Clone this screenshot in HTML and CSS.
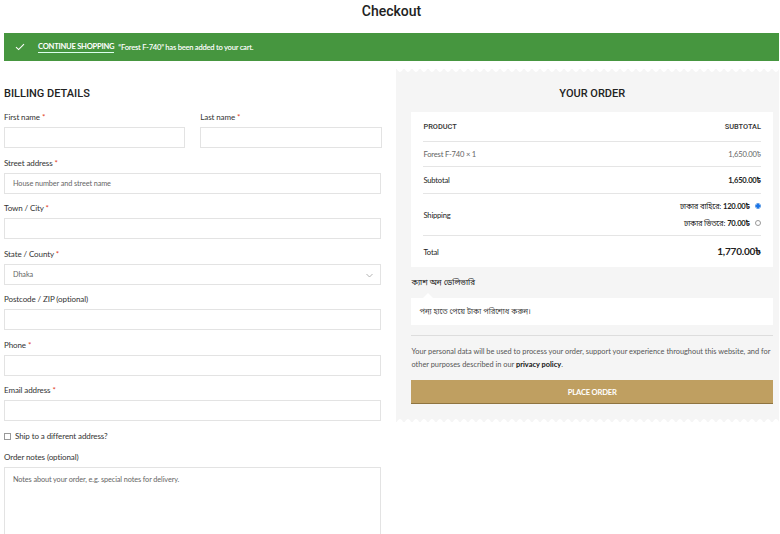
FILE: index.html
```html
<!DOCTYPE html>
<html lang="en">
<head>
<meta charset="utf-8">
<title>Checkout</title>
<link rel="stylesheet" href="styles.css">
</head>
<body>
<div class="page">
  <h1 class="page-title">Checkout</h1>
  <div class="notice">
    <svg class="notice-check" width="10" height="8" viewBox="0 0 10 8"><path d="M1 4.2 L3.6 6.6 L9 1.2" fill="none" stroke="#fff" stroke-width="1.1"/></svg>
    <a class="notice-link" href="#">CONTINUE SHOPPING</a>
    <span class="notice-text">“Forest F-740” has been added to your cart.</span>
  </div>
  <div class="checkout">
    <div class="billing">
      <h3 class="section-title">BILLING DETAILS</h3>
      <div class="row-2">
        <div class="field"><label class="label">First name <span class="req">*</span></label><div class="input"></div></div>
        <div class="field"><label class="label">Last name <span class="req">*</span></label><div class="input"></div></div>
      </div>
      <div class="field"><label class="label">Street address <span class="req">*</span></label><div class="input"><span class="ph">House number and street name</span></div></div>
      <div class="field"><label class="label">Town / City <span class="req">*</span></label><div class="input"></div></div>
      <div class="field"><label class="label">State / County <span class="req">*</span></label>
        <div class="input select"><span class="ph">Dhaka</span>
          <svg class="caret" width="7" height="5" viewBox="0 0 7 5"><path d="M0.5 1 L3.5 4 L6.5 1" fill="none" stroke="#aaa" stroke-width="0.9"/></svg>
        </div>
      </div>
      <div class="field"><label class="label">Postcode / ZIP (optional)</label><div class="input"></div></div>
      <div class="field"><label class="label">Phone <span class="req">*</span></label><div class="input"></div></div>
      <div class="field"><label class="label">Email address <span class="req">*</span></label><div class="input"></div></div>
      <div class="ship-diff"><span class="checkbox"></span><span>Ship to a different address?</span></div>
      <div class="field"><label class="label">Order notes (optional)</label><div class="input textarea"><span class="ph">Notes about your order, e.g. special notes for delivery.</span></div></div>
    </div>
    <div class="order">
      <h3 class="order-title">YOUR ORDER</h3>
      <div class="order-box">
        <div class="orow head"><span>PRODUCT</span><span>SUBTOTAL</span></div>
        <div class="orow item"><span>Forest F-740 × 1</span><span>1,650.00৳</span></div>
        <div class="orow sub"><span>Subtotal</span><span class="strong">1,650.00৳</span></div>
        <div class="orow ship"><span>Shipping</span>
          <div class="ship-opts">
            <div class="ship-opt">ঢাকার বাহিরে: <b>120.00৳</b><span class="radio on"></span></div>
            <div class="ship-opt">ঢাকার ভিতরে: <b>70.00৳</b><span class="radio"></span></div>
          </div>
        </div>
        <div class="orow total"><span>Total</span><span class="total-amt">1,770.00৳</span></div>
      </div>
      <div class="pay-label">ক্যাশ অন ডেলিভারি</div>
      <div class="pay-box">পন্য হাতে পেয়ে টাকা পরিশোধ করুন।</div>
      <p class="privacy">Your personal data will be used to process your order, support your experience throughout this website, and for other purposes described in our <a href="#">privacy policy</a>.</p>
      <button class="place">PLACE ORDER</button>
    </div>
  </div>
</div>
</body>
</html>
```
FILE: styles.css
```css
* { box-sizing: border-box; }
html, body { margin: 0; padding: 0; background: #fff; }
body {
  font-family: Lato, "Noto Sans", "Noto Sans Bengali", sans-serif;
  color: #333;
  width: 780px;
  height: 534px;
  overflow: hidden;
}
.page { padding: 0 1px 0 4px; }
.page-title {
  font-family: Roboto, "Liberation Sans", sans-serif;
  font-weight: 500;
  font-size: 14px;
  line-height: 22px;
  margin: 0;
  height: 33px;
  text-align: center;
  color: #222;
}
.notice {
  background: #46963f;
  height: 28px;
  display: flex;
  align-items: center;
  color: #fff;
  font-size: 7.6px;
  letter-spacing: -0.25px;
}
.notice-check { margin-left: 11px; margin-right: 13px; }
.notice-link {
  color: #fff;
  font-weight: 700;
  text-decoration: none;
  border-bottom: 1px solid #dfe;
  padding-bottom: 1px;
  margin-right: 4px;
}
.notice-text { font-weight: 600; }
.checkout { display: flex; margin-top: 8px; gap: 15px; }
.billing { width: 378px; padding-top: 17px; }
.section-title {
  font-family: Roboto, "Liberation Sans", sans-serif;
  font-weight: 500;
  font-size: 11px;
  line-height: 16px;
  margin: 0 0 10px;
  color: #222;
}
.row-2 { display: flex; gap: 15px; }
.row-2 .field { flex: 1; }
.field { margin-bottom: 9.5px; }
.label {
  display: block;
  font-size: 8px;
  line-height: 10px;
  margin-bottom: 5px;
  letter-spacing: -0.1px;
  color: #333;
}
.req { color: #e2401c; }
.input {
  height: 21px;
  border: 1px solid #e3e3e3;
  background: #fff;
  display: flex;
  align-items: center;
  padding: 0 8px;
  position: relative;
}
.ph { font-size: 7.3px; color: #666; letter-spacing: -0.1px; }
.select .caret { position: absolute; right: 7px; top: 8px; }
.ship-diff {
  display: flex;
  align-items: center;
  gap: 4px;
  font-size: 8px;
  letter-spacing: -0.1px;
  margin-top: 0;
  margin-bottom: 10px;
  height: 11px;
}
.checkbox { width: 7px; height: 7px; border: 1px solid #999; background: #fff; }
.textarea { height: 80px; align-items: flex-start; padding-top: 7px; }
.order {
  width: 383px;
  background: #f5f5f5;
  padding: 17px 6px 18px 15px;
  align-self: flex-start;
  position: relative;
}
.order::before, .order::after {
  content: "";
  position: absolute;
  left: 0; right: 0;
  height: 3px;
  background-image: radial-gradient(circle at 4px 0, #fff 2.5px, transparent 3px);
  background-size: 8px 3px;
  background-repeat: repeat-x;
}
.order::before { top: 0; }
.order::after { bottom: 0; background-image: radial-gradient(circle at 4px 3px, #fff 2.5px, transparent 3px); }
.order-title {
  font-family: Roboto, "Liberation Sans", sans-serif;
  font-weight: 500;
  font-size: 11px;
  line-height: 16px;
  text-align: center;
  margin: 0 0 10px;
  color: #222;
}
.order-box { background: #fff; padding: 0 12px; }
.orow {
  display: flex;
  justify-content: space-between;
  align-items: center;
  border-bottom: 1px solid #e5e5e5;
  font-size: 7.6px;
  letter-spacing: -0.2px;
}
.orow.head {
  height: 30px;
  font-family: Roboto, "Liberation Sans", sans-serif;
  font-weight: 500;
  font-size: 7.4px;
  letter-spacing: 0;
  color: #333;
}
.orow.item { height: 25px; color: #666; }
.orow.sub { height: 27px; color: #222; }
.strong { font-weight: 700; }
.orow.ship { height: 42px; color: #222; }
.ship-opts { display: flex; flex-direction: column; align-items: flex-end; gap: 6px; }
.ship-opt { display: flex; align-items: center; font-size: 7.6px; }
.ship-opt b { margin-left: 2px; }
.radio {
  width: 6px; height: 6px;
  border: 1px solid #999;
  border-radius: 50%;
  margin-left: 5px;
  background: #fff;
}
.radio.on { border-color: #4a90e2; background: radial-gradient(circle, #1a73e8 1.6px, #fff 2px); }
.orow.total { height: 31px; border-bottom: 0; color: #222; }
.total-amt { font-weight: 700; font-size: 10px; }
.pay-label { font-size: 8px; margin-top: 10px; line-height: 10px; color: #222; }
.pay-box {
  background: #fff;
  margin-top: 11px;
  height: 27px;
  padding: 0 8px;
  display: flex;
  align-items: center;
  font-size: 7.6px;
  color: #444;
  position: relative;
}
.pay-box::before {
  content: "";
  position: absolute;
  left: 12px;
  top: -5px;
  border-left: 5px solid transparent;
  border-right: 5px solid transparent;
  border-bottom: 5px solid #fff;
}
.privacy {
  margin: 10px 0 0;
  border-top: 1px solid #ddd;
  padding-top: 9px;
  font-size: 7.4px;
  line-height: 13px;
  color: #555;
  letter-spacing: 0;
}
.privacy a { color: #111; font-weight: 700; text-decoration: none; }
.place {
  display: block;
  width: 100%;
  margin-top: 9px;
  height: 24px;
  background: #bf9f61;
  border: 0;
  border-bottom: 1px solid #8f7440;
  color: #fff;
  font-family: Lato, sans-serif;
  font-weight: 700;
  font-size: 7.6px;
  letter-spacing: -0.2px;
  padding: 0;
}
```
